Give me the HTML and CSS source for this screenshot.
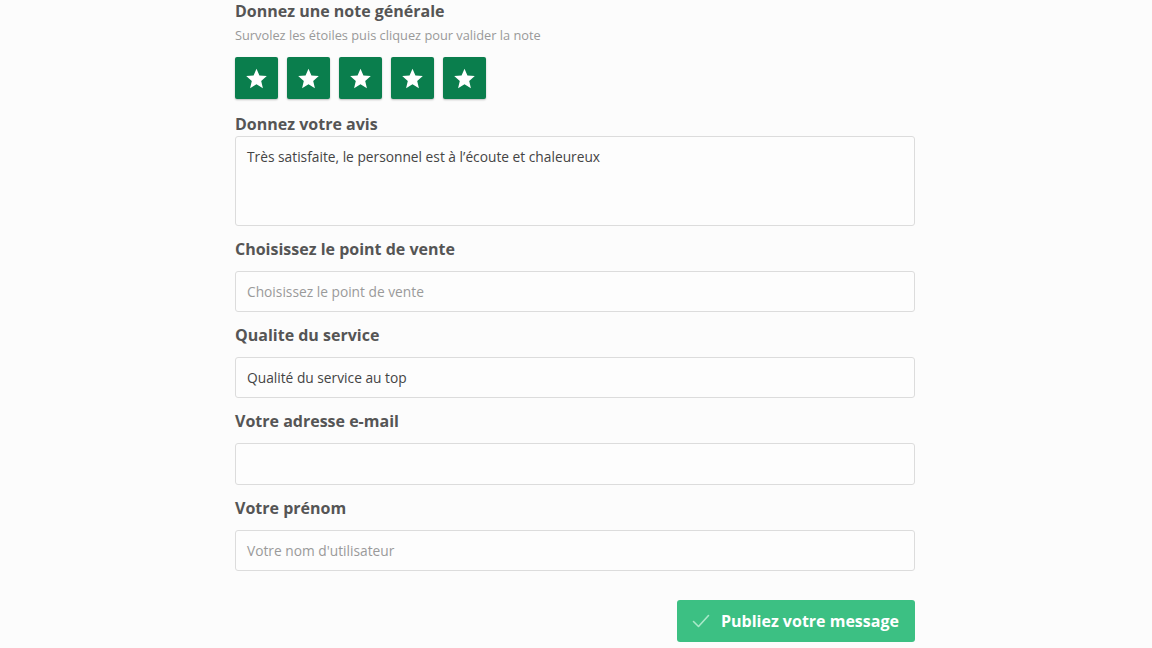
FILE: index.html
```html
<!DOCTYPE html>
<html lang="fr">
<head>
<meta charset="utf-8">
<link rel="stylesheet" href="styles.css">
</head>
<body>
<main class="form">
  <h1 class="title">Donnez une note générale</h1>
  <p class="subtitle">Survolez les étoiles puis cliquez pour valider la note</p>
  <div class="stars">
    <span class="star"><svg viewBox="0 0 24 24" width="23" height="23"><path d="M12 1.8l3.05 7.1 7.7.6-5.85 5.05 1.8 7.55L12 18.05 5.3 22.1l1.8-7.55L1.25 9.5l7.7-.6z" fill="#fff"/></svg></span>
    <span class="star"><svg viewBox="0 0 24 24" width="23" height="23"><path d="M12 1.8l3.05 7.1 7.7.6-5.85 5.05 1.8 7.55L12 18.05 5.3 22.1l1.8-7.55L1.25 9.5l7.7-.6z" fill="#fff"/></svg></span>
    <span class="star"><svg viewBox="0 0 24 24" width="23" height="23"><path d="M12 1.8l3.05 7.1 7.7.6-5.85 5.05 1.8 7.55L12 18.05 5.3 22.1l1.8-7.55L1.25 9.5l7.7-.6z" fill="#fff"/></svg></span>
    <span class="star"><svg viewBox="0 0 24 24" width="23" height="23"><path d="M12 1.8l3.05 7.1 7.7.6-5.85 5.05 1.8 7.55L12 18.05 5.3 22.1l1.8-7.55L1.25 9.5l7.7-.6z" fill="#fff"/></svg></span>
    <span class="star"><svg viewBox="0 0 24 24" width="23" height="23"><path d="M12 1.8l3.05 7.1 7.7.6-5.85 5.05 1.8 7.55L12 18.05 5.3 22.1l1.8-7.55L1.25 9.5l7.7-.6z" fill="#fff"/></svg></span>
  </div>

  <div class="field field-first">
    <label class="label">Donnez votre avis</label>
    <div class="control textarea">Très satisfaite, le personnel est à l’écoute et chaleureux</div>
  </div>
  <div class="field">
    <label class="label">Choisissez le point de vente</label>
    <div class="control placeholder">Choisissez le point de vente</div>
  </div>
  <div class="field">
    <label class="label">Qualite du service</label>
    <div class="control">Qualité du service au top</div>
  </div>
  <div class="field">
    <label class="label">Votre adresse e-mail</label>
    <div class="control tall"></div>
  </div>
  <div class="field">
    <label class="label">Votre prénom</label>
    <div class="control placeholder">Votre nom d'utilisateur</div>
  </div>
  <div class="actions">
    <button class="submit" type="button">
      <svg viewBox="0 0 20 20" width="20" height="20"><path d="M2.5 10.5l5 5L17.5 4.5" fill="none" stroke="#a9e8c9" stroke-width="1.6" stroke-linecap="round" stroke-linejoin="round"/></svg>
      <span>Publiez votre message</span>
    </button>
  </div>
</main>
</body>
</html>
```

FILE: styles.css
```css
html, body {
  margin: 0;
  padding: 0;
  background: #fcfcfc;
}
body {
  font-family: "Open Sans", "DejaVu Sans", sans-serif;
  color: #4d4d4d;
}
.form {
  width: 680px;
  margin-left: calc(50% - 341px);
  padding-top: 1px;
}
.title {
  margin: 0;
  font-size: 16px;
  line-height: 20px;
  font-weight: 700;
  color: #555;
}
.subtitle {
  margin: 6px 0 0;
  font-size: 12.8px;
  line-height: 16px;
  color: #999;
}
.stars {
  margin-top: 14px;
  display: flex;
  gap: 9px;
}
.star {
  width: 43px;
  height: 42px;
  background: #0a7e4d;
  border-radius: 2px;
  box-shadow: 0 1px 2px rgba(0,0,0,0.25);
  display: flex;
  align-items: center;
  justify-content: center;
}
.field {
  margin-top: 13px;
}
.field-first {
  margin-top: 15px;
}
.label {
  display: block;
  font-size: 16px;
  line-height: 20px;
  font-weight: 700;
  color: #555;
}
.control {
  margin-top: 12px;
  box-sizing: border-box;
  height: 41px;
  border: 1px solid #dcdcdc;
  border-radius: 3px;
  background: #fdfdfd;
  padding: 0 11px;
  display: flex;
  align-items: center;
  font-size: 13.75px;
  color: #444;
}
.control.tall {
  height: 42px;
}
.field-first .control {
  margin-top: 2px;
}
.control.textarea {
  height: 90px;
  align-items: flex-start;
  padding-top: 11px;
  line-height: 18px;
}
.control.placeholder {
  color: #9a9a9a;
}
.actions {
  margin-top: 29px;
  display: flex;
  justify-content: flex-end;
}
.submit {
  width: 238px;
  height: 42px;
  border: none;
  border-radius: 3px;
  background: #3cc083;
  color: #fff;
  font-family: inherit;
  font-size: 16px;
  font-weight: 700;
  display: flex;
  align-items: center;
  gap: 10px;
  padding: 0 0 0 14px;
  cursor: pointer;
}
```
